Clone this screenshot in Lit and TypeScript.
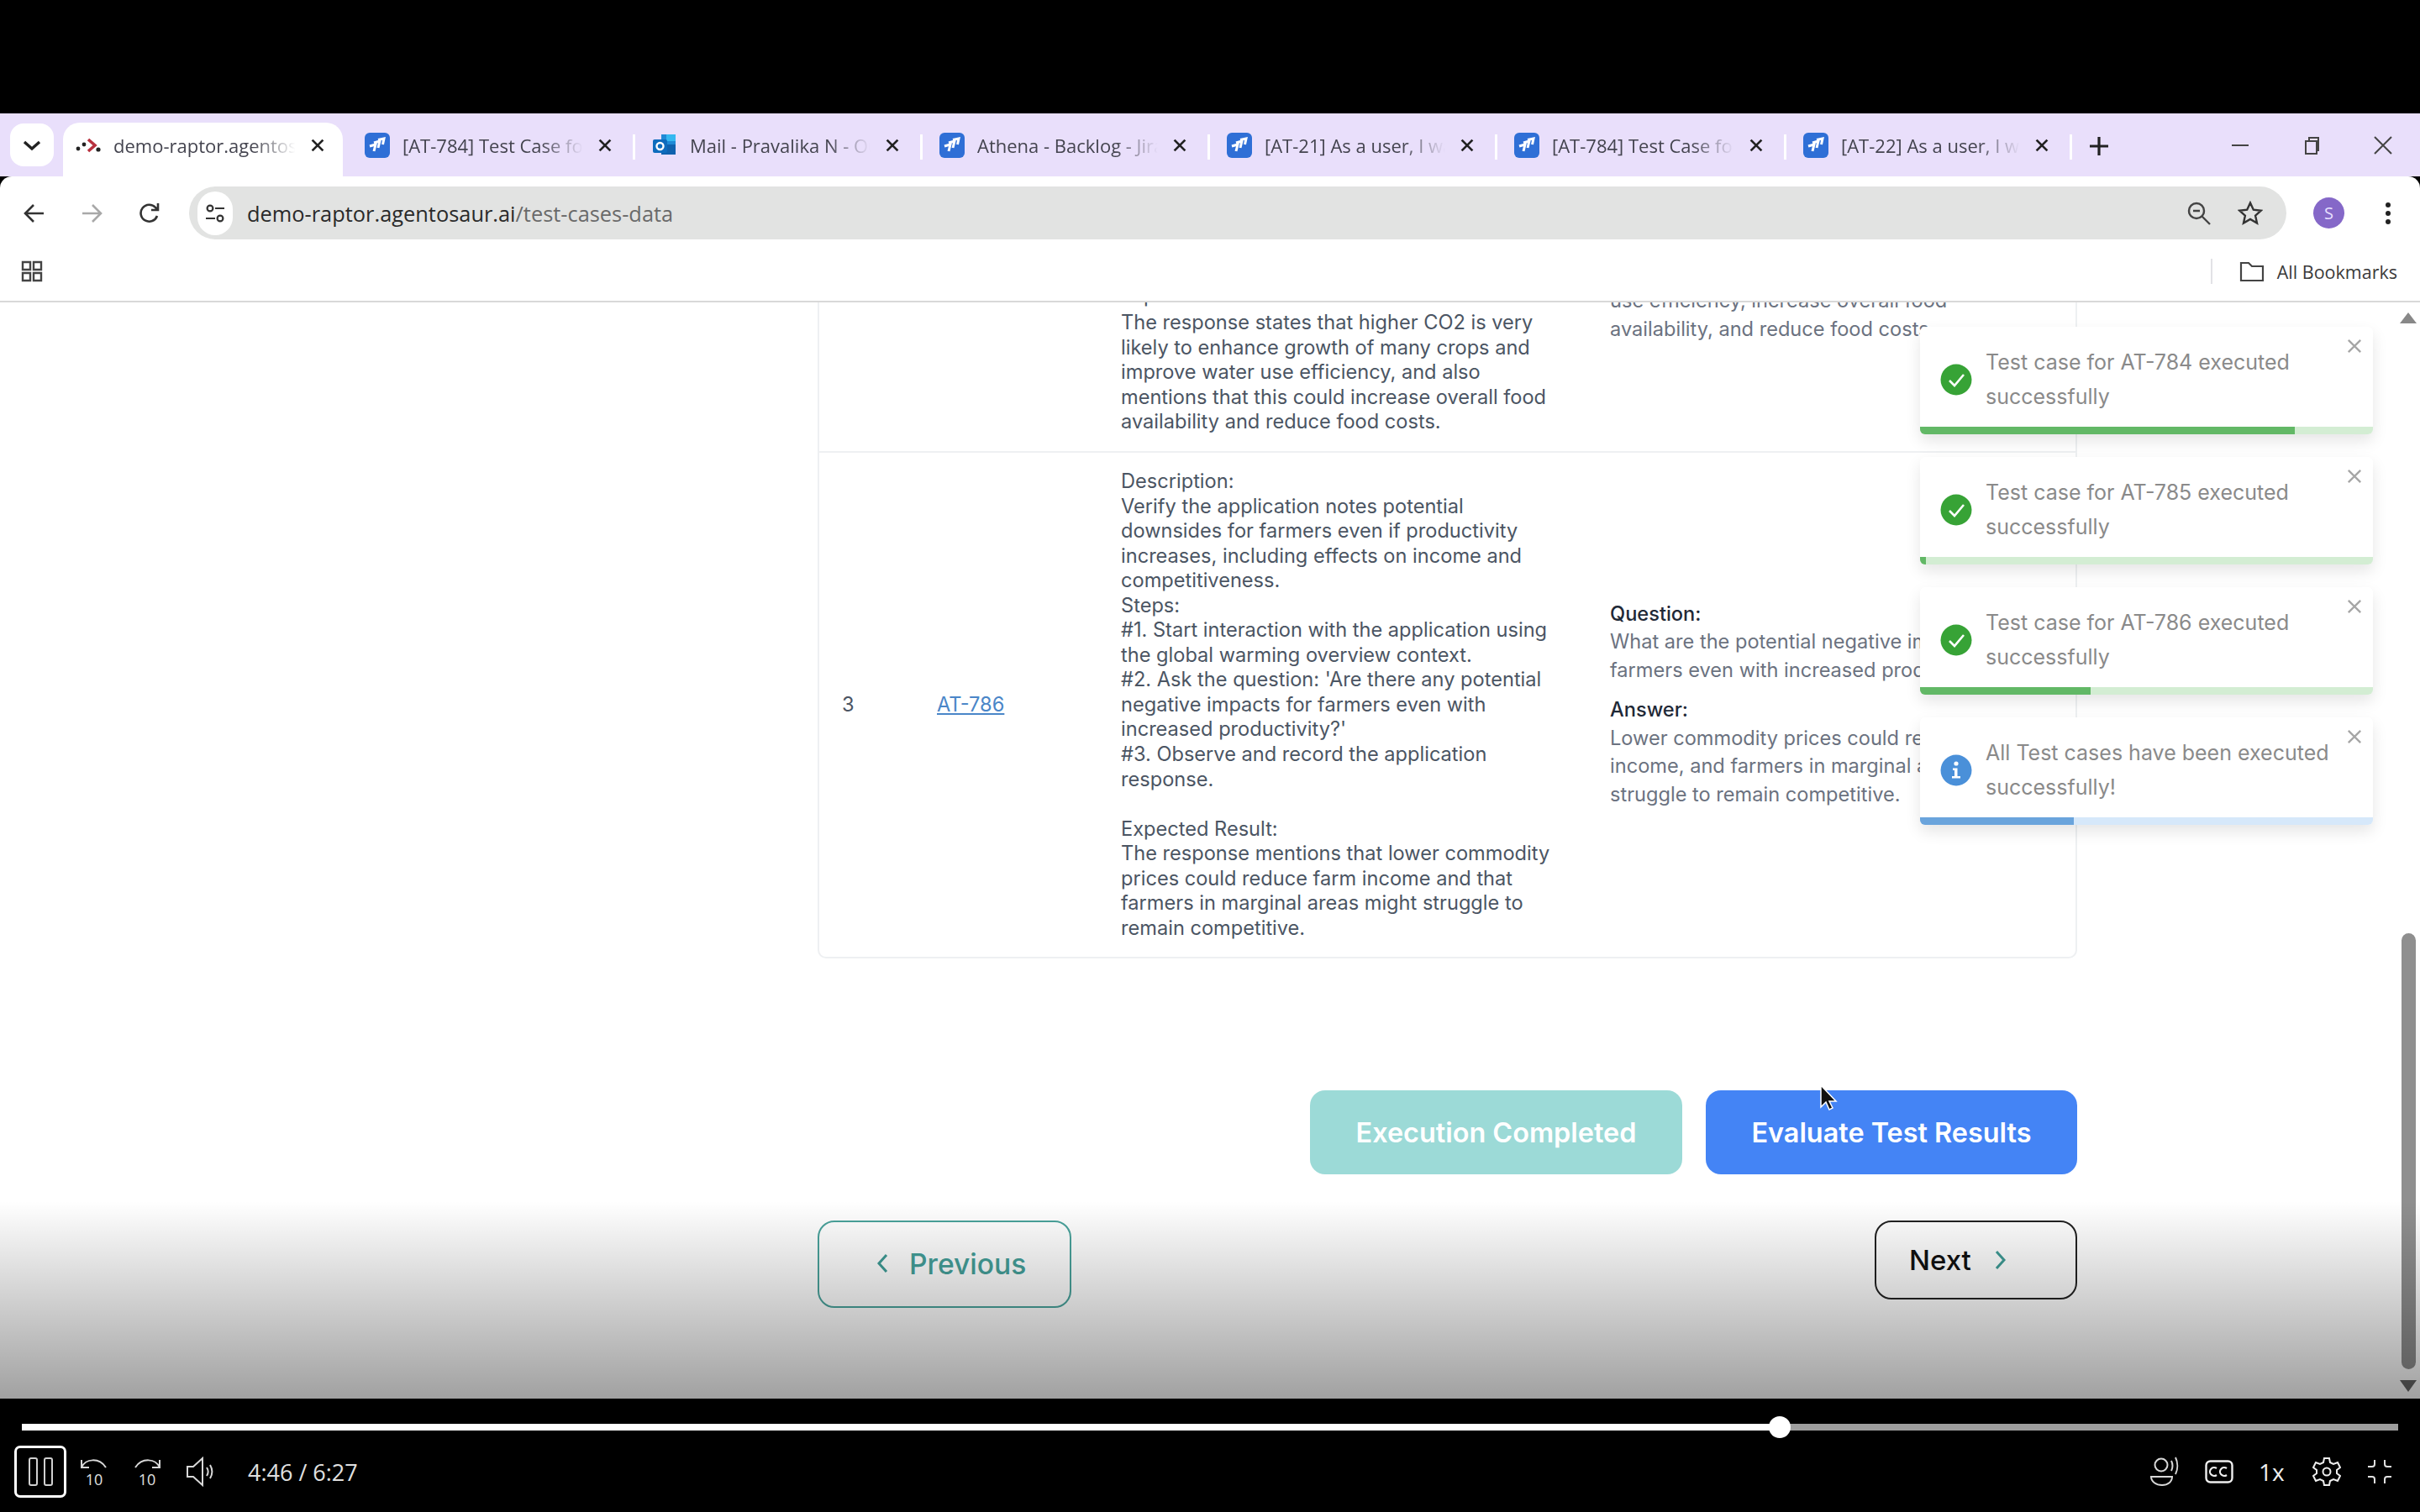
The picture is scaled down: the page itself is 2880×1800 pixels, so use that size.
import { LitElement, html, css, svg } from 'lit';
import { customElement } from 'lit/decorators.js';

const jira = html`<svg class="fav" viewBox="0 0 30 30"><rect width="30" height="30" rx="6" fill="#2f6fd6"/><path d="M6 16l7-2-2 8M11 12l7-2-2 8M16 8.500l7-1.500-1.500 7" fill="none" stroke="#fff" stroke-width="3"/></svg>`;
const outlook = html`<svg class="fav" viewBox="0 0 30 30"><path d="M11 2h17v24H11z" fill="#1f8ad6"/><path d="M17 2h11v8H17z" fill="#35b8f0"/><path d="M17 14h11v12H11v-4z" fill="#0f62ae"/><rect x="1" y="8" width="17" height="16" rx="2" fill="#0e6cbd"/><circle cx="9.5" cy="16" r="4" fill="none" stroke="#fff" stroke-width="2.4"/></svg>`;
const raptor = html`<svg class="fav" viewBox="0 0 30 30"><circle cx="3" cy="19" r="2.4" fill="#222"/><circle cx="10" cy="14" r="2.4" fill="#222"/><path d="M15 8l8 7-8 7" fill="none" stroke="#b8323f" stroke-width="3.6"/><circle cx="27" cy="20" r="2.6" fill="#222"/></svg>`;

const tabs = [
  { title: '[AT-784] Test Case for AT', icon: jira, width: 348 },
  { title: 'Mail - Pravalika N - Outlook', icon: outlook, width: 342 },
  { title: 'Athena - Backlog - Jira', icon: jira, width: 342 },
  { title: '[AT-21] As a user, I want', icon: jira, width: 342 },
  { title: '[AT-784] Test Case for AT', icon: jira, width: 344 },
  { title: '[AT-22] As a user, I want', icon: jira, width: 340 },
];

const toasts = [
  { text: 'Test case for AT-784 executed successfully', progress: 446, kind: 'ok' },
  { text: 'Test case for AT-785 executed successfully', progress: 7, kind: 'ok' },
  { text: 'Test case for AT-786 executed successfully', progress: 203, kind: 'ok' },
  { text: 'All Test cases have been executed successfully!', progress: 183, kind: 'info' },
];

const closeX = (size: number, color: string, width: number) => html`<svg width=${size} height=${size} viewBox="0 0 20 20"><path d="M2 2l16 16M18 2L2 18" stroke=${color} stroke-width=${width} fill="none"/></svg>`;

@customElement('app-root')
export class AppRoot extends LitElement {
  static styles = css`
    :host {
      display: block;
      width: 2880px;
      height: 1800px;
      overflow: hidden;
      background: #000;
      font-family: Inter, "Liberation Sans", sans-serif;
    }
    .top-black { height: 135px; }

    .strip {
      height: 75px;
      background: #e9dffb;
      display: flex;
      align-items: flex-end;
      padding-left: 12px;
      font-family: "Open Sans", sans-serif;
      font-size: 22px;
      color: #44444f;
      box-sizing: border-box;
    }
    .tab-menu {
      width: 52px;
      height: 51px;
      margin: 0 11px 12px 0;
      background: #fff;
      border-radius: 16px;
      display: flex;
      align-items: center;
      justify-content: center;
    }
    .tab {
      height: 64px;
      display: flex;
      align-items: center;
      box-sizing: border-box;
      padding: 0 28px 10px 20px;
      position: relative;
    }
    .tab.first { padding-left: 26px; }
    .tab.active {
      width: 333px;
      background: #fff;
      border-radius: 20px 20px 0 0;
      padding-left: 15px;
      padding-right: 22px;
    }
    .tab-sep {
      width: 3px;
      height: 30px;
      background: #fff;
      margin-bottom: 20px;
      margin-left: -3px;
      flex: none;
    }
    .fav { width: 30px; height: 30px; flex: none; }
    .tab-title {
      flex: 1;
      margin: 0 14px 0 15px;
      white-space: nowrap;
      overflow: hidden;
      -webkit-mask-image: linear-gradient(90deg, #000 75%, transparent 98%);
      mask-image: linear-gradient(90deg, #000 75%, transparent 98%);
    }
    .tab svg.x { flex: none; }
    .plus { margin: 0 0 24px 20px; }
    .win {
      margin-left: auto;
      display: flex;
      align-items: center;
      gap: 61px;
      padding: 0 32px 25px 0;
    }

    .toolbar {
      height: 85px;
      background: #fff;
      display: flex;
      align-items: center;
      box-sizing: border-box;
      padding-top: 2px;
      padding-left: 28px;
      border-radius: 14px 14px 0 0;
    }
    .nav { display: flex; gap: 42px; align-items: center; width: 197px; }
    .omni {
      width: 2496px;
      height: 63px;
      background: #e2e3e2;
      border-radius: 32px;
      display: flex;
      align-items: center;
      padding: 0 28px 0 10px;
      box-sizing: border-box;
      font-family: "Open Sans", sans-serif;
      font-size: 25.4px;
      color: #2a2a2a;
    }
    .chip {
      width: 42px;
      height: 52px;
      border-radius: 26px;
      background: #fff;
      display: flex;
      align-items: center;
      justify-content: center;
      margin-right: 17px;
    }
    .url-rest { color: #6a6a6a; }
    .omni-end { margin-left: auto; display: flex; gap: 31px; align-items: center; }
    .avatar {
      width: 37px;
      height: 37px;
      border-radius: 50%;
      background: #8568c8;
      color: #e8e0ff;
      font-size: 20px;
      font-family: "Open Sans", sans-serif;
      display: flex;
      align-items: center;
      justify-content: center;
      margin: 0 48px 0 32px;
      flex: none;
    }

    .bookmarks {
      height: 65px;
      background: #fff;
      border-bottom: 2px solid #d8d8d8;
      box-sizing: border-box;
      display: flex;
      align-items: center;
      padding: 0 27px 7px 25px;
      font-family: "Open Sans", sans-serif;
      font-size: 21.5px;
      color: #3a3a3a;
    }
    .bm-end { margin-left: auto; display: flex; align-items: center; gap: 15px; }
    .bm-sep { width: 2px; height: 30px; background: #e2e2e6; margin-right: 17px; }

    .page {
      height: 1305px;
      background: #fff;
      position: relative;
      overflow: hidden;
      display: flex;
    }
    .content {
      width: 1499px;
      margin-left: 973px;
      flex: none;
    }
    .table {
      border: 2px solid #eef0f2;
      border-top: none;
      border-radius: 0 0 10px 10px;
      font-size: 23.6px;
      color: #4b5563;
    }
    .row {
      display: grid;
      grid-template-columns: 140px 219px 582px 1fr;
      overflow: hidden;
      box-sizing: border-box;
    }
    .row.clipped {
      height: 179px;
      grid-template-rows: 177px;
      align-items: end;
      border-bottom: 2px solid #eef0f2;
    }
    .row.full { align-items: center; }
    .row.full > div:not(.desc) { padding-bottom: 2px; }
    .num { padding-left: 27px; }
    .link { color: #4a86c8; text-decoration: underline; }
    .desc { padding: 19px 0 20px; line-height: 29.55px; white-space: nowrap; }
    .cut { display: block; margin-bottom: 3px; }
    .answer { line-height: 33.5px; color: #6b7280; white-space: nowrap; }
    .clipped .answer { padding-bottom: 129px; }
    .label { color: #1f2937; font-weight: 500; }
    .block + .block { margin-top: 14px; }

    .actions {
      display: flex;
      justify-content: flex-end;
      gap: 28px;
      margin-top: 157px;
      margin-right: 0;
    }
    .btn {
      height: 100px;
      border: none;
      border-radius: 18px;
      color: #fff;
      font: 600 32.4px Inter, sans-serif;
      padding: 0;
      width: 443px;
    }
    .btn.done { background: #9cdad7; }
    .btn.evaluate { background: #4484f5; width: 442px; }
    .steps {
      display: flex;
      justify-content: space-between;
      align-items: flex-start;
      margin-top: 55px;
    }
    .step {
      box-sizing: border-box;
      background: transparent;
      border-radius: 20px;
      font: 500 33px Inter, sans-serif;
      display: flex;
      align-items: center;
    }
    .step.prev {
      width: 302px;
      height: 104px;
      border: 2px solid #4aa39c;
      color: #45a09a;
      padding: 0 0 2px 68px;
      gap: 25px;
      font-size: 33.6px;
    }
    .step.next {
      width: 241px;
      height: 94px;
      border: 2px solid #222;
      color: #111;
      padding-left: 39px;
      gap: 28px;
    }

    .scrollbar {
      width: 20px;
      margin: 12px 4px 8px auto;
      display: flex;
      flex-direction: column;
      align-items: center;
    }
    .thumb {
      width: 17px;
      height: 519px;
      margin-top: 726px;
      border-radius: 9px;
      background: #8f8f8f;
    }
    .arrow-down { margin-top: 13px; }

    .toasts {
      position: absolute;
      top: 29px;
      right: 56px;
      width: 539px;
      display: flex;
      flex-direction: column;
      gap: 27px;
      z-index: 2;
    }
    .toast {
      height: 128px;
      background: #fff;
      box-shadow: 0 8px 18px rgba(0, 0, 0, 0.1);
      border-radius: 6px;
      position: relative;
      overflow: hidden;
      font-size: 25px;
      line-height: 41px;
      color: #8a8a8a;
      display: flex;
      align-items: flex-start;
      box-sizing: border-box;
      padding: 22px 24px 0 24px;
    }
    .toast-icon { width: 38px; height: 38px; margin-top: 22px; flex: none; }
    .toast-text { margin-left: 16px; width: 450px; }
    .toast-x { position: absolute; top: 14px; right: 13px; display: flex; }
    .bar {
      position: absolute;
      left: 0;
      right: 0;
      bottom: 0;
      height: 9px;
    }
    .bar.ok { background: #d3edd3; }
    .bar.info { background: #d6e8fa; }
    .fill { height: 100%; }
    .ok .fill { background: #62b866; }
    .info .fill { background: #6aa4dc; }

    .shade {
      position: absolute;
      left: 0;
      right: 0;
      top: 1070px;
      bottom: 0;
      background: linear-gradient(rgba(0, 0, 0, 0), rgba(0, 0, 0, 0.37));
      pointer-events: none;
      z-index: 3;
    }
    .cursor { position: absolute; left: 2165px; top: 931px; z-index: 4; }

    .controls {
      height: 135px;
      background: #000;
      color: #e6e6e6;
      padding-top: 30px;
      box-sizing: border-box;
    }
    .track {
      height: 8px;
      margin: 0 26px;
      background: #9e9e9e;
      position: relative;
    }
    .played { height: 100%; background: #fff; }
    .knob {
      position: absolute;
      top: -9px;
      width: 26px;
      height: 26px;
      border-radius: 50%;
      background: #fff;
      margin-left: -13px;
    }
    .ctl-row {
      display: flex;
      align-items: center;
      margin-top: 18px;
      padding: 0 32px 0 17px;
    }
    .pause {
      width: 62px;
      height: 62px;
      box-sizing: border-box;
      border: 3px solid #fff;
      border-radius: 7px;
      display: flex;
      align-items: center;
      justify-content: center;
      gap: 7px;
    }
    .pause i {
      width: 11px;
      height: 34px;
      border: 2px solid #d0d0d0;
      border-radius: 3px;
      box-sizing: border-box;
      display: block;
    }
    .ctl-left { display: flex; align-items: center; gap: 27px; margin-left: 15px; }
    .ctl-left svg:last-child { margin-left: 1px; }
    .time {
      font-family: "Open Sans", sans-serif;
      font-size: 27px;
      margin-left: 40px;
      color: #e0e0e0;
    }
    .ctl-right { margin-left: auto; display: flex; align-items: center; gap: 30px; }
    .speed { font-family: "Open Sans", sans-serif; font-size: 28px; color: #eee; width: 34px; }
  `;

  renderCheck() {
    return html`<svg class="toast-icon" viewBox="0 0 38 38"><circle cx="19" cy="19" r="18.5" fill="#37a336"/><path d="M11 20l6 6 11-13" fill="none" stroke="#fff" stroke-width="2.6"/></svg>`;
  }

  renderInfo() {
    return html`<svg class="toast-icon" viewBox="0 0 38 38"><circle cx="19" cy="19" r="18.5" fill="#4a90d9"/><circle cx="19" cy="11" r="2.6" fill="#fff"/><path d="M15 16.5h5.5V26H24v2.6H14V26h3v-7h-2z" fill="#fff"/></svg>`;
  }

  renderTabs() {
    return html`<div class="strip">
      <div class="tab-menu">
        <svg width="24" height="14" viewBox="0 0 24 14"><path d="M3 3l9 8 9-8" fill="none" stroke="#222" stroke-width="3.4"/></svg>
      </div>
      <div class="tab active">
        ${raptor}
        <span class="tab-title">demo-raptor.agentosaur.ai</span>
        <svg class="x" width="16" height="16" viewBox="0 0 20 20"><path d="M2 2l16 16M18 2L2 18" stroke="#222" stroke-width="3.4"/></svg>
      </div>
      ${tabs.map(
        (t, i) => html`<div class="tab ${i === 0 ? 'first' : ''}" style="width:${t.width}px">
            ${t.icon}
            <span class="tab-title">${t.title}</span>
            <svg class="x" width="16" height="16" viewBox="0 0 20 20"><path d="M2 2l16 16M18 2L2 18" stroke="#222" stroke-width="3.4"/></svg>
          </div>
          <div class="tab-sep"></div>`
      )}
      <svg class="plus" width="24" height="24" viewBox="0 0 24 24"><path d="M12 1v22M1 12h22" stroke="#222" stroke-width="3.2"/></svg>
      <div class="win">
        <svg width="24" height="24" viewBox="0 0 24 24"><path d="M2 12h20" stroke="#444" stroke-width="2"/></svg>
        <svg width="24" height="24" viewBox="0 0 24 24"><path d="M5 7h13v15H5zM9 7V3h11v15h-2" fill="none" stroke="#444" stroke-width="2"/></svg>
        <svg width="24" height="24" viewBox="0 0 24 24"><path d="M2 2l20 20M22 2L2 22" stroke="#444" stroke-width="2"/></svg>
      </div>
    </div>`;
  }

  renderToolbar() {
    return html`<div class="toolbar">
      <div class="nav">
        <svg width="26" height="26" viewBox="0 0 26 26"><path d="M24 13H3M12 3L2 13l10 10" fill="none" stroke="#333" stroke-width="2.6"/></svg>
        <svg width="26" height="26" viewBox="0 0 26 26"><path d="M2 13h21M14 3l10 10-10 10" fill="none" stroke="#a8a8a8" stroke-width="2.6"/></svg>
        <svg width="28" height="28" viewBox="0 0 28 28"><path d="M23 17a10 10 0 1 1-2-10l3 3M24 2v8h-8" fill="none" stroke="#333" stroke-width="2.6"/></svg>
      </div>
      <div class="omni">
        <div class="chip">
          <svg width="26" height="26" viewBox="0 0 26 26"><circle cx="7" cy="7" r="3.4" fill="none" stroke="#333" stroke-width="2.2"/><path d="M13 7h11M2 19h11" stroke="#333" stroke-width="2.2"/><circle cx="19" cy="19" r="3.4" fill="none" stroke="#333" stroke-width="2.2"/></svg>
        </div>
        <span>demo-raptor.agentosaur.ai<span class="url-rest">/test-cases-data</span></span>
        <div class="omni-end">
          <svg width="30" height="30" viewBox="0 0 30 30"><circle cx="12" cy="12" r="9" fill="none" stroke="#444" stroke-width="2.4"/><path d="M18.5 18.5L28 28M8 12h8" stroke="#444" stroke-width="2.4"/></svg>
          <svg width="30" height="30" viewBox="0 0 30 30"><path d="M15 2.5l3.8 8.2 9 1-6.7 6 1.9 8.8-8-4.6-8 4.6 1.9-8.8-6.7-6 9-1z" fill="none" stroke="#333" stroke-width="2.4"/></svg>
        </div>
      </div>
      <div class="avatar">S</div>
      <svg width="8" height="28" viewBox="0 0 8 28"><circle cx="4" cy="4" r="3" fill="#222"/><circle cx="4" cy="14" r="3" fill="#222"/><circle cx="4" cy="24" r="3" fill="#222"/></svg>
    </div>`;
  }

  renderBookmarks() {
    return html`<div class="bookmarks">
      <svg width="26" height="26" viewBox="0 0 26 26"><path d="M2 2h9v9H2zM15 2h9v9h-9zM2 15h9v9H2zM15 15h9v9h-9z" fill="none" stroke="#444" stroke-width="2.4"/></svg>
      <div class="bm-end">
        <div class="bm-sep"></div>
        <svg width="30" height="26" viewBox="0 0 30 26"><path d="M2 3h9l4 4h13v17H2z" fill="none" stroke="#444" stroke-width="2.2"/></svg>
        <span>All Bookmarks</span>
      </div>
    </div>`;
  }

  renderTable() {
    return html`<div class="table">
      <div class="row clipped">
        <div></div>
        <div></div>
        <div class="desc">
          <span class="cut">Expected Result:</span>
          The response states that higher CO2 is very<br />
          likely to enhance growth of many crops and<br />
          improve water use efficiency, and also<br />
          mentions that this could increase overall food<br />
          availability and reduce food costs.
        </div>
        <div class="answer">
          use efficiency, increase overall food<br />
          availability, and reduce food costs.
        </div>
      </div>
      <div class="row full">
        <div class="num">3</div>
        <div><span class="link">AT-786</span></div>
        <div class="desc">
          Description:<br />
          Verify the application notes potential<br />
          downsides for farmers even if productivity<br />
          increases, including effects on income and<br />
          competitiveness.<br />
          Steps:<br />
          #1. Start interaction with the application using<br />
          the global warming overview context.<br />
          #2. Ask the question: 'Are there any potential<br />
          negative impacts for farmers even with<br />
          increased productivity?'<br />
          #3. Observe and record the application<br />
          response.<br />
          <br />
          Expected Result:<br />
          The response mentions that lower commodity<br />
          prices could reduce farm income and that<br />
          farmers in marginal areas might struggle to<br />
          remain competitive.
        </div>
        <div class="answer">
          <div class="block">
            <div class="label">Question:</div>
            What are the potential negative impacts for<br />
            farmers even with increased productivity?
          </div>
          <div class="block">
            <div class="label">Answer:</div>
            Lower commodity prices could reduce farm<br />
            income, and farmers in marginal areas might<br />
            struggle to remain competitive.
          </div>
        </div>
      </div>
    </div>`;
  }

  renderControls() {
    const skip = (back: boolean) => html`<svg width="36" height="40" viewBox="0 0 36 40">
      <path d=${back ? 'M3 15C8 4 24 3 32 15M3 6v9h9' : 'M33 15C28 4 12 3 4 15M33 6v9h-9'} fill="none" stroke="#d8d8d8" stroke-width="2"/>
      ${svg`<text x="18" y="36" text-anchor="middle" font-family="Open Sans" font-size="18" fill="#e0e0e0">10</text>`}
    </svg>`;
    return html`<div class="controls">
      <div class="track">
        <div class="played" style="width:2092px"></div>
        <div class="knob" style="left:2092px"></div>
      </div>
      <div class="ctl-row">
        <div class="pause"><i></i><i></i></div>
        <div class="ctl-left">
          ${skip(true)} ${skip(false)}
          <svg width="34" height="36" viewBox="0 0 34 36"><path d="M2 12h7l11-10v32L9 24H2z" fill="none" stroke="#d8d8d8" stroke-width="2"/><path d="M25 13c2 3 2 7 0 10M29 10c3 5 3 11 0 16" fill="none" stroke="#d8d8d8" stroke-width="2"/></svg>
        </div>
        <span class="time">4:46 / 6:27</span>
        <div class="ctl-right">
          <svg width="36" height="36" viewBox="0 0 36 36"><circle cx="14" cy="10" r="7.5" fill="none" stroke="#d8d8d8" stroke-width="2"/><path d="M2 24h25c0 6-5 10-12 10S2 30 2 24z" fill="none" stroke="#d8d8d8" stroke-width="2"/><path d="M26 5c2 4 2 8 0 12M31 1c3 6 3 14 0 20" fill="none" stroke="#d8d8d8" stroke-width="2"/></svg>
          <svg width="34" height="28" viewBox="0 0 34 28"><rect x="1.5" y="1.5" width="31" height="25" rx="5" fill="none" stroke="#eee" stroke-width="2.4"/><path d="M14 10a5 5 0 1 0 0 8M26 10a5 5 0 1 0 0 8" fill="none" stroke="#eee" stroke-width="2.2"/></svg>
          <span class="speed">1x</span>
          <svg width="34" height="36" viewBox="0 0 34 36"><path d="M14 2h6l1 5 4 2 5-2 3 6-4 3v4l4 3-3 6-5-2-4 2-1 5h-6l-1-5-4-2-5 2-3-6 4-3v-4L1 13l3-6 5 2 4-2z" fill="none" stroke="#eee" stroke-width="2"/><circle cx="17" cy="18" r="4.5" fill="none" stroke="#eee" stroke-width="2"/></svg>
          <svg width="32" height="32" viewBox="0 0 32 32"><path d="M10 2v5a3 3 0 0 1-3 3H2M22 2v5a3 3 0 0 0 3 3h5M10 30v-5a3 3 0 0 0-3-3H2M22 30v-5a3 3 0 0 1 3-3h5" fill="none" stroke="#e0e0e0" stroke-width="2"/></svg>
        </div>
      </div>
    </div>`;
  }

  render() {
    return html`
      <div class="top-black"></div>
      ${this.renderTabs()} ${this.renderToolbar()} ${this.renderBookmarks()}
      <div class="page">
        <div class="content">
          ${this.renderTable()}
          <div class="actions">
            <button class="btn done">Execution Completed</button>
            <button class="btn evaluate">Evaluate Test Results</button>
          </div>
          <div class="steps">
            <div class="step prev">
              <svg width="14" height="24" viewBox="0 0 14 24"><path d="M12 2L3 12l9 10" fill="none" stroke="#3f9c96" stroke-width="3"/></svg>
              Previous
            </div>
            <div class="step next">
              Next
              <svg width="14" height="24" viewBox="0 0 14 24"><path d="M2 2l9 10-9 10" fill="none" stroke="#3f9c96" stroke-width="3"/></svg>
            </div>
          </div>
        </div>
        <div class="scrollbar">
          <svg width="20" height="13" viewBox="0 0 20 13"><path d="M10 0l10 13H0z" fill="#888"/></svg>
          <div class="thumb"></div>
          <svg class="arrow-down" width="20" height="14" viewBox="0 0 20 14"><path d="M0 0h20L10 14z" fill="#666"/></svg>
        </div>
        <div class="toasts">
          ${toasts.map(
            (t) => html`<div class="toast">
              ${t.kind === 'ok' ? this.renderCheck() : this.renderInfo()}
              <div class="toast-text">${t.text}</div>
              <div class="toast-x">${closeX(18, '#a6a6a6', 2.6)}</div>
              <div class="bar ${t.kind}"><div class="fill" style="width:${t.progress}px"></div></div>
            </div>`
          )}
        </div>
        <svg class="cursor" width="22" height="32" viewBox="0 0 22 32"><path d="M2 1v26l6-6 4 9 4-2-4-8h8z" fill="#111" stroke="#fff" stroke-width="1.5"/></svg>
        <div class="shade"></div>
      </div>
      ${this.renderControls()}
    `;
  }
}
